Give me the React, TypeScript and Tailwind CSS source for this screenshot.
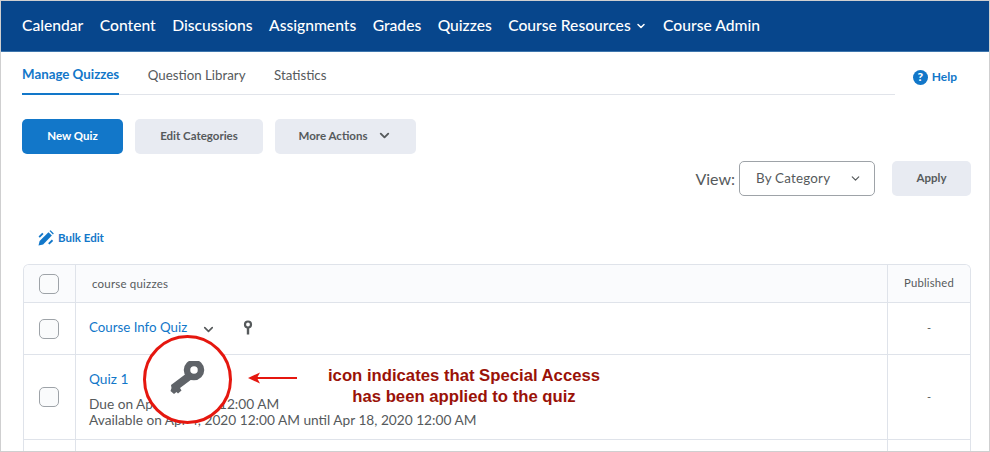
import React from 'react';
import { ChevronDown } from 'lucide-react';

const navItems = ['Calendar', 'Content', 'Discussions', 'Assignments', 'Grades', 'Quizzes'];

const KeyIcon: React.FC<{ className?: string }> = ({ className }) => (
    <svg className={className} viewBox="0 0 40 40" fill="none">
        <circle cx="27" cy="9" r="7" stroke="#5f6368" strokeWidth="6.5" />
        <path d="M20 12 L4 24 L4.5 27 L3.5 30 L7 33 L9.5 31 L11 32.5 L14.5 29.5 L13 27 L25 18 Z" fill="#5f6368" />
    </svg>
);

const SmallKey: React.FC = () => (
    <svg className="w-[10px] h-[16px]" viewBox="0 0 10 16" fill="none">
        <circle cx="5" cy="4.5" r="3" stroke="#565a5c" strokeWidth="2.2" />
        <path d="M3.8 7 H6.2 V14.5 H3.8 Z" fill="#565a5c" />
    </svg>
);

const PencilIcon: React.FC = () => (
    <svg className="w-[16px] h-[16px]" viewBox="0 0 15 15" fill="#1277c9">
        <path d="M0.5 14.5 L1.5 10.2 L9.8 2 L13 5.2 L4.8 13.5 Z" />
        <path d="M10.8 1 L11.8 0.2 L14.8 3.2 L14 4.2 Z" />
        <path d="M0.5 6 L4 2.5 L5.2 3.7 L1.7 7.2 Z" />
        <path d="M9.5 12.5 L13 9 L14.2 10.2 L10.7 13.7 Z" />
    </svg>
);

const Checkbox: React.FC = () => (
    <div className="w-[20px] h-[20px] rounded-[5px] border border-[#9ea3a8] bg-[#fafbfc]" />
);

const App: React.FC = () => {
    return (
        <div className="relative w-[990px] h-[452px] overflow-hidden bg-white border border-[#cfcfd0] font-['Lato','Liberation_Sans',sans-serif]">
            <nav className="h-[51px] bg-[#07468c] border-b border-[#3d76ad] flex items-center pl-[21px] gap-[16.4px] text-white text-[15.65px] font-medium">
                {navItems.map(item => (
                    <span key={item}>{item}</span>
                ))}
                <span className="flex items-center gap-[4px]">
                    Course Resources
                    <ChevronDown size={12} strokeWidth={3} />
                </span>
                <span>Course Admin</span>
            </nav>

            <div className="flex pl-[21px] pr-[32px] h-[43px]">
                <div className="flex gap-[28.5px] w-[873px] border-b border-[#e1e4ea] text-[13.3px]">
                    <div className="h-[43px] pt-[4px] border-b-2 border-[#1277c9] text-[#1277c9] font-bold flex items-center">Manage Quizzes</div>
                    <div className="h-[43px] pt-[4px] text-[#565a5c] flex items-center">Question Library</div>
                    <div className="h-[43px] pt-[4px] text-[#565a5c] flex items-center">Statistics</div>
                </div>
                <div className="flex-1 flex items-center justify-end gap-[4px] text-[#1277c9] text-[12px] font-bold pt-[7px]">
                    <span className="w-[15px] h-[15px] rounded-full bg-[#1277c9] text-white text-[12px] font-black flex items-center justify-center">?</span>
                    Help
                </div>
            </div>

            <div className="flex gap-[12px] pl-[21px] mt-[24px]">
                <div className="w-[101px] h-[35px] pb-[2px] rounded-[5px] bg-[#1277c9] text-white text-[11.5px] font-bold flex items-center justify-center">New Quiz</div>
                <div className="w-[128px] h-[35px] pb-[2px] rounded-[5px] bg-[#e8ebf2] text-[#565a5c] text-[11.5px] font-bold flex items-center justify-center">Edit Categories</div>
                <div className="w-[141px] h-[35px] pb-[2px] rounded-[5px] bg-[#e8ebf2] text-[#565a5c] text-[11.5px] font-bold flex items-center justify-center gap-[10px]">
                    More Actions
                    <ChevronDown size={15} strokeWidth={3} />
                </div>
            </div>

            <div className="flex items-center justify-end pr-[18px] mt-[7px] h-[35px]">
                <span className="text-[16px] text-[#565a5c] mr-[4px]">View:</span>
                <div className="w-[136px] h-[35px] rounded-[5px] border border-[#9ea3a8] flex items-center justify-between pl-[16px] pr-[12px] text-[13.4px] text-[#565a5c] tracking-[0.2px]">
                    By Category
                    <ChevronDown size={13} strokeWidth={2.2} />
                </div>
                <div className="ml-[17px] w-[79px] h-[35px] pb-[2px] rounded-[5px] bg-[#e8ebf2] text-[#565a5c] text-[11.5px] font-bold flex items-center justify-center">Apply</div>
            </div>

            <div className="flex items-center gap-[4px] pl-[37px] mt-[34px] h-[15px] text-[#1277c9] text-[11.5px] font-bold">
                <PencilIcon />
                Bulk Edit
            </div>

            <div className="mt-[19px] ml-[22px] w-[948px] border-t border-l border-r border-[#dfe3ea] rounded-t-[6px] overflow-hidden">
                <div className="flex h-[38px] bg-[#fafbfd] border-b border-[#dfe3ea]">
                    <div className="w-[52px] pr-[2px] border-r border-[#dfe3ea] flex items-center justify-center"><Checkbox /></div>
                    <div className="flex-1 flex items-center pl-[16px] text-[11.5px] text-[#565a5c] tracking-[0.2px]">course quizzes</div>
                    <div className="w-[83px] border-l border-[#dfe3ea] flex items-center justify-center text-[11.3px] text-[#565a5c] tracking-[0.2px]">Published</div>
                </div>
                <div className="flex h-[52px] border-b border-[#dfe3ea]">
                    <div className="w-[52px] pr-[2px] border-r border-[#dfe3ea] flex items-center justify-center"><Checkbox /></div>
                    <div className="flex-1 flex items-center pl-[13px] pb-[2px] text-[13.3px] text-[#1277c9]">
                        Course Info Quiz
                        <ChevronDown size={15} strokeWidth={2.6} className="ml-[14px] mt-[3px] text-[#565a5c]" />
                        <span className="ml-[27px] flex"><SmallKey /></span>
                    </div>
                    <div className="w-[83px] border-l border-[#dfe3ea] flex items-center justify-center text-[11px] text-[#565a5c]">-</div>
                </div>
                <div className="flex h-[85px] border-b border-[#dfe3ea]">
                    <div className="w-[52px] pr-[2px] border-r border-[#dfe3ea] flex items-center justify-center"><Checkbox /></div>
                    <div className="flex-1 pl-[13px] pt-[15px] text-[13.7px]">
                        <div className="text-[#1277c9] leading-[17px]">Quiz 1</div>
                        <div className="mt-[9px] text-[#565a5c] leading-[16px]">Due on Apr 18, 2020 12:00 AM</div>
                        <div className="text-[#565a5c] leading-[16px]">Available on Apr 4, 2020 12:00 AM until Apr 18, 2020 12:00 AM</div>
                    </div>
                    <div className="w-[83px] border-l border-[#dfe3ea] flex items-center justify-center text-[11px] text-[#565a5c]">-</div>
                </div>
                <div className="flex h-[40px]">
                    <div className="w-[52px] border-r border-[#dfe3ea]" />
                    <div className="flex-1" />
                    <div className="w-[83px] border-l border-[#dfe3ea]" />
                </div>
            </div>

            {/* callout on top of the table */}
            <div className="absolute left-[142px] top-[334px] w-[89px] h-[89px] rounded-full border-[3px] border-[#e5170f] bg-white flex items-center justify-center">
                <KeyIcon className="w-[40px] h-[40px] mt-[2px] ml-[-1px] blur-[0.7px]" />
            </div>
            <svg className="absolute left-[246px] top-[370px] w-[52px] h-[14px]" viewBox="0 0 52 14">
                <path d="M50 7 H8" stroke="#e5170f" strokeWidth="2.2" />
                <path d="M1 7 L13 1.5 L10 7 L13 12.5 Z" fill="#e5170f" />
            </svg>
            <div className="absolute left-[315px] top-[364px] w-[296px] text-center text-[#9a1208] text-[16.7px] font-bold leading-[21px] font-['Liberation_Sans',sans-serif]">
                icon indicates that Special Access
                <br />
                has been applied to the quiz
            </div>
        </div>
    );
};

export default App;
